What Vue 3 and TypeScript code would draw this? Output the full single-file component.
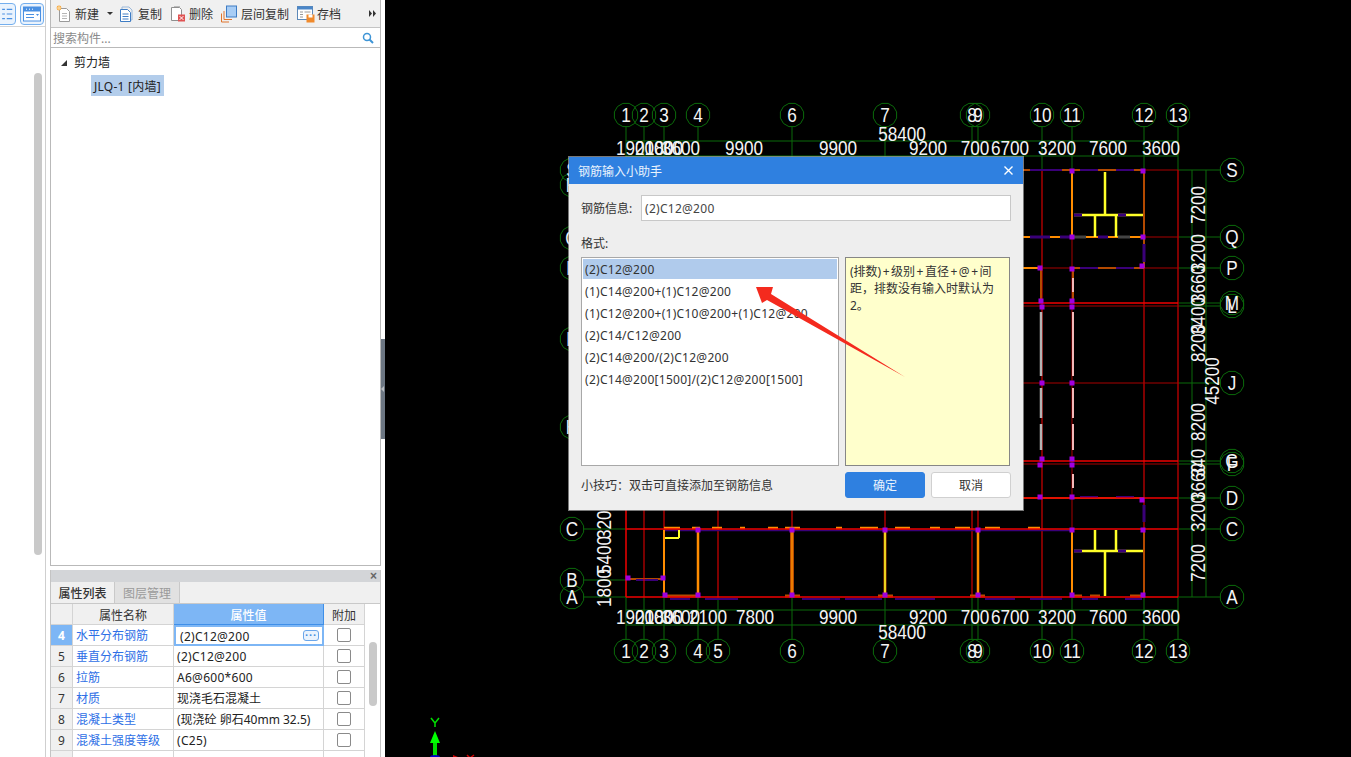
<script setup lang="ts">
type Seg = { x1: number; y1: number; x2: number; y2: number; c: string; w: number }
type Lbl = { x: number; y: number; t: string; rot?: boolean }

const GREEN = '#0b6b0b'
const DARK = '#a80000'
const RED = '#f00000'
const ORANGE = '#ff8c00'
const BROWN = '#b44a00'
const YELLOW = '#ffff28'
const NAVY = '#3a0078'
const GREY = '#b4b4b4'

const hs = (c: string, w: number, y: number, ...xs: number[]): Seg[] => {
  const out: Seg[] = []
  for (let i = 0; i < xs.length; i += 2) out.push({ x1: xs[i], y1: y, x2: xs[i + 1], y2: y, c, w })
  return out
}
const vs = (c: string, w: number, x: number, ...ys: number[]): Seg[] => {
  const out: Seg[] = []
  for (let i = 0; i < ys.length; i += 2) out.push({ x1: x, y1: ys[i], x2: x, y2: ys[i + 1], c, w })
  return out
}

const topX: [string, number][] = [['1', 626], ['2', 644], ['3', 664], ['4', 698], ['6', 792], ['7', 885], ['8', 972], ['9', 978], ['10', 1042], ['11', 1072], ['12', 1144], ['13', 1178]]
const botX: [string, number][] = [['1', 626], ['2', 644], ['3', 664], ['4', 698], ['5', 718], ['6', 792], ['7', 885], ['8', 972], ['9', 978], ['10', 1042], ['11', 1072], ['12', 1144], ['13', 1178]]
const rightY: [string, number][] = [['S', 170], ['Q', 237], ['P', 268], ['M', 303], ['L', 306], ['J', 383], ['G', 461], ['F', 464], ['D', 498], ['C', 529], ['A', 597]]
const leftY: [string, number][] = [['S', 170], ['R', 185], ['Q', 238], ['P', 268], ['K', 339], ['H', 427], ['C', 529], ['B', 580], ['A', 597]]

const ring = (cx: number, cy: number, r = 12): string => {
  const pts: string[] = []
  for (let i = 0; i < 12; i++) {
    const a = (Math.PI / 6) * i + Math.PI / 12
    pts.push(`${(cx + r * Math.cos(a)).toFixed(1)},${(cy + r * Math.sin(a)).toFixed(1)}`)
  }
  return pts.join(' ')
}

const bubbles = [
  ...topX.map(([t, x]) => ({ t, x, y: 115 })),
  ...botX.map(([t, x]) => ({ t, x, y: 651 })),
  ...rightY.map(([t, y]) => ({ t, x: 1232, y })),
  ...leftY.map(([t, y]) => ({ t, x: 572, y })),
]

const segs: Seg[] = [
  ...topX.flatMap(([, x]) => vs(GREEN, 1, x, 127, 170)),
  ...botX.flatMap(([, x]) => vs(GREEN, 1, x, 597, 639)),
  ...rightY.flatMap(([, y]) => hs(GREEN, 1, y, 1178, 1220)),
  ...leftY.flatMap(([, y]) => hs(GREEN, 1, y, 584, 626)),
  ...hs(GREEN, 1, 141, 626, 1178),
  ...hs(GREEN, 1, 156, 626, 1178),
  ...hs(GREEN, 1, 610, 626, 1178),
  ...hs(GREEN, 1, 625, 626, 1178),
  ...vs(GREEN, 1, 1192, 170, 597),
  ...vs(GREEN, 1, 1206, 170, 597),
  ...[664, 718, 792, 885, 972, 978, 1042, 1144, 1178].flatMap((x) => vs(DARK, 1.5, x, 170, 597)),
  ...vs(DARK, 1, 1072, 170, 597),
  ...[170, 237, 268, 306, 383, 464].flatMap((y) => hs(DARK, 1, y, 626, 1178)),
  ...hs(ORANGE, 2.5, 528, 664, 680, 692, 700, 712, 722, 740, 745, 768, 778, 785, 800, 836, 842, 860, 878, 895, 910, 930, 940, 955, 970),
  ...hs(ORANGE, 2.5, 528, 985, 1000, 1028, 1040),
  ...hs(NAVY, 1.5, 530.5, 664, 1072),
  ...hs(BROWN, 3, 596, 664, 700, 785, 800, 878, 893, 970, 985, 1072, 1082, 1090, 1100, 1130, 1144),
  ...hs(NAVY, 2, 599, 670, 690, 705, 738, 802, 840, 845, 882, 895, 935, 985, 1015, 1030, 1062, 1082, 1098, 1125, 1142),
  ...vs(ORANGE, 2, 664, 530, 597),
  ...vs(ORANGE, 2.5, 698, 530, 597),
  ...vs(BROWN, 4, 792, 530, 597),
  ...vs(ORANGE, 1.5, 792, 530, 597),
  ...vs(BROWN, 3, 885, 530, 597),
  ...vs(YELLOW, 1.5, 885, 530, 597),
  ...vs(ORANGE, 2.5, 978, 530, 597),
  ...vs(ORANGE, 2, 1072, 530, 597),
  ...vs(BROWN, 2, 1144, 529, 597),
  ...hs(BROWN, 2, 579, 626, 664),
  ...hs(NAVY, 2, 580, 636, 658),
  ...hs(BROWN, 2, 170, 1023, 1144),
  ...hs(NAVY, 2, 170, 1030, 1062, 1080, 1098, 1116, 1134),
  ...vs(ORANGE, 2, 1072, 170, 237),
  ...vs(BROWN, 2, 1144, 170, 268),
  ...hs(ORANGE, 2, 237, 1023, 1144),
  ...hs(NAVY, 3, 237, 1030, 1050, 1060, 1070, 1098, 1108),
  ...hs('#444444', 3, 237, 1074, 1086, 1118, 1130),
  ...hs(BROWN, 2, 268, 1072, 1144),
  ...hs(ORANGE, 2, 268, 1023, 1040),
  ...hs(NAVY, 2, 268, 1080, 1098, 1116, 1134),
  ...vs(NAVY, 3, 1144, 244, 262),
  ...hs(BROWN, 2, 498, 1023, 1144),
  ...hs(NAVY, 2, 497, 1080, 1098, 1116, 1134),
  ...vs(NAVY, 3, 1144, 505, 522),
  ...vs(BROWN, 2, 1041, 268, 303),
  ...vs(GREY, 2.5, 1041, 312, 376, 388, 418, 424, 450),
  ...vs(BROWN, 2, 1073, 268, 303),
  ...vs('#f4b8b8', 2, 1073, 278, 292, 312, 376, 388, 418, 424, 450, 474, 488),
  ...hs(RED, 1.5, 303, 626, 1178),
  ...hs(RED, 1.5, 461, 626, 1178),
  ...hs(RED, 1.5, 498, 626, 1178),
  ...hs(RED, 1.5, 529, 626, 1178),
  ...hs(RED, 1.5, 597, 626, 1178),
  ...vs(RED, 1.5, 626, 498, 597),
  ...vs(RED, 1, 644, 498, 597),
  ...vs(YELLOW, 2.5, 1105, 172, 215),
  ...hs(YELLOW, 2.5, 215, 1074, 1143),
  ...vs(YELLOW, 2.5, 1095, 215, 237),
  ...vs(YELLOW, 2.5, 1116, 215, 237),
  ...vs(YELLOW, 2.5, 1105, 551, 596),
  ...hs(YELLOW, 2.5, 551, 1074, 1143),
  ...vs(YELLOW, 2.5, 1095, 530, 551),
  ...vs(YELLOW, 2.5, 1116, 530, 551),
  ...hs(NAVY, 3, 215, 1074, 1082, 1118, 1126),
  ...hs(NAVY, 3, 551, 1074, 1082, 1118, 1126),
  ...hs(YELLOW, 2, 538, 665, 679),
  ...vs(YELLOW, 2, 679, 530, 538),
]

const nodes: [number, number][] = [
  [1072, 171], [1143, 171], [1072, 237], [1143, 237], [1040, 268], [1072, 269], [1142, 266],
  [1041, 301], [1072, 301], [1042, 307], [1072, 307], [1042, 383], [1072, 383],
  [1042, 459], [1072, 459], [1040, 465], [1072, 465], [1040, 497], [1072, 497], [1142, 500],
  [1143, 530], [1072, 530], [1072, 595], [1143, 595],
  [628, 578], [663, 578], [665, 595], [698, 595], [792, 595], [885, 595], [978, 595],
  [698, 530], [792, 530], [885, 530], [978, 530],
]

const labels: Lbl[] = [
  { x: 902, y: 141, t: '58400' },
  ...[[635, '1900'], [654, '2100'], [664, '1800'], [681, '3600'], [744, '9900'], [838, '9900'], [928, '9200'], [975, '700'], [1010, '6700'], [1057, '3200'], [1108, '7600'], [1161, '3600']].map(([x, t]) => ({ x: x as number, y: 155, t: t as string })),
  ...[[635, '1900'], [654, '2100'], [664, '1800'], [681, '3600'], [708, '2100'], [755, '7800'], [838, '9900'], [928, '9200'], [975, '700'], [1010, '6700'], [1057, '3200'], [1108, '7600'], [1161, '3600']].map(([x, t]) => ({ x: x as number, y: 624, t: t as string })),
  { x: 902, y: 639, t: '58400' },
  ...[[205, '7200'], [253, '3200'], [284, '3660'], [316, '3400'], [343, '8200'], [422, '8200'], [463, '340'], [482, '3660'], [513, '3200'], [563, '7200']].map(([y, t]) => ({ x: 1205, y: y as number, t: t as string, rot: true })),
  { x: 1219, y: 381, t: '45200', rot: true },
  ...[[520, '3200'], [555, '5400'], [588, '1800']].map(([y, t]) => ({ x: 611, y: y as number, t: t as string, rot: true })),
]

const place = (x: number, y: number, rot = false): string =>
  `translate(${x} ${y})${rot ? ' rotate(-90)' : ''} scale(0.88 1)`

const noteLine2 = '距\uFF0C排数没有输入时默认为'
const tipText = '小技巧\uFF1A双击可直接添加至钢筋信息'
const formats = ['(2)C12@200', '(1)C14@200+(1)C12@200', '(1)C12@200+(1)C10@200+(1)C12@200', '(2)C14/C12@200', '(2)C14@200/(2)C12@200', '(2)C14@200[1500]/(2)C12@200[1500]']
const rows = [
  { n: 4, name: '水平分布钢筋', val: '(2)C12@200', on: true, lat: true },
  { n: 5, name: '垂直分布钢筋', val: '(2)C12@200', on: false, lat: true },
  { n: 6, name: '拉筋', val: 'A6@600*600', on: false, lat: true },
  { n: 7, name: '材质', val: '现浇毛石混凝土', on: false, lat: false },
  { n: 8, name: '混凝土类型', val: '(现浇砼 卵石40mm 32.5)', on: false, lat: false },
  { n: 9, name: '混凝土强度等级', val: '(C25)', on: false, lat: true },
]
</script>

<template>
  <div class="page">
    <aside class="strip">
      <div class="strip-icons">
        <span class="mode-btn partial">
          <svg width="24" height="20" viewBox="0 0 24 20"><path d="M10 5h3M10 10h3M10 15h3M15 5h6M15 10h6M15 15h6" stroke="#4a90e2" stroke-width="1.3" fill="none" /></svg>
        </span>
        <span class="mode-btn">
          <svg width="20" height="18" viewBox="0 0 20 18"><rect x="1.5" y="2" width="17" height="14" fill="#fff" stroke="#4a90e2" /><rect x="1.5" y="2" width="17" height="4.5" fill="#4a90e2" /><path d="M4 4.2h1M7 4.2h1M10 4.2h1" stroke="#fff" /><path d="M4 9.5h8M4 12.5h8" stroke="#4a90e2" /><path d="M14 9l1.5 2 1.5-2" fill="#4a90e2" /></svg>
        </span>
      </div>
      <div class="strip-track"><div class="strip-thumb"></div></div>
    </aside>

    <section class="center">
      <div class="tree-panel">
        <div class="tools">
          <span class="tool t-new">
            <svg width="16" height="18" viewBox="0 0 16 18"><path d="M3.5 3.5h7l3 3v10h-10z" fill="#fff" stroke="#9a9a9a" /><path d="M6 8.500h5M6 11h5M6 13.500h5" stroke="#b5b5b5" /><circle cx="3" cy="3" r="2.400" fill="#f5a63c" /><path d="M1 3h4M3 1v4" stroke="#fde1b0" /></svg>
            <span>新建</span><i class="caret"></i>
          </span>
          <span class="tool t-copy">
            <svg width="15" height="18" viewBox="0 0 15 18"><path d="M3 4.500V2h7l3 3v10h-2" fill="none" stroke="#9cb9da" /><path d="M1.500 4.500h7l3 3v9h-10z" fill="#fff" stroke="#3e7cc4" /><path d="M3.500 9h6M3.500 11.500h6M3.500 14h6" stroke="#3e7cc4" /></svg>
            <span>复制</span>
          </span>
          <span class="tool t-del">
            <svg width="16" height="18" viewBox="0 0 16 18"><path d="M1.500 2.500h8l2 2v11h-10z" fill="#fff" stroke="#8f8f8f" /><path d="M4 1.500h6" stroke="#bbb" /><rect x="8" y="9.500" width="7" height="7" fill="#e05252" /><path d="M9.600 11.100l3.800 3.800M13.400 11.100l-3.800 3.800" stroke="#fff" /></svg>
            <span>删除</span>
          </span>
          <span class="tool t-floor">
            <svg width="16" height="18" viewBox="0 0 16 18"><path d="M.5 17V8.500M.5 17H8M3 14.500V6M3 14.500h8" stroke="#e0752e" fill="none" /><rect x="5.500" y="1" width="10" height="11" fill="#a8cdf5" stroke="#3e7cc4" /></svg>
            <span>层间复制</span>
          </span>
          <span class="tool t-save">
            <svg width="18" height="18" viewBox="0 0 18 18"><rect x=".5" y="1.500" width="15" height="13" fill="#fff" stroke="#5c88b8" /><rect x=".5" y="1.500" width="15" height="3" fill="#4a86c8" /><path d="M3 7h3M3 9.500h3M3 12h3M7.500 7h6" stroke="#9a9a9a" /><rect x="9.500" y="9.500" width="8" height="8" fill="#f08a2c" /><rect x="11.500" y="9.500" width="4" height="3" fill="#fff" /></svg>
            <span>存档</span>
          </span>
          <span class="more">
            <svg width="7" height="7" viewBox="0 0 7 7"><path d="M0 0l3 3.500L0 7zM4 0l3 3.500L4 7z" fill="#333" /></svg>
          </span>
        </div>
        <div class="search">
          <span class="ph">搜索构件...</span>
          <svg width="12" height="12" viewBox="0 0 12 12"><circle cx="5" cy="5" r="3.500" fill="none" stroke="#3d94d6" stroke-width="1.500" /><path d="M7.500 7.500L11 11" stroke="#3d94d6" stroke-width="2" /></svg>
        </div>
        <div class="tree">
          <div class="tree-root"><i class="tri"></i><span>剪力墙</span></div>
          <div class="tree-leaf"><span>JLQ-1 [内墙]</span></div>
        </div>
      </div>

      <div class="prop-panel">
        <div class="prop-head"><span class="close-x">×</span></div>
        <div class="tabs">
          <span class="tab on">属性列表</span>
          <span class="tab">图层管理</span>
        </div>
        <div class="prop-body">
          <div class="grid">
            <div class="row head">
              <span class="c num"></span>
              <span class="c name">属性名称</span>
              <span class="c val act">属性值</span>
              <span class="c add">附加</span>
            </div>
            <div v-for="r in rows" :key="r.n" class="row">
              <span class="c num" :class="{ act: r.on }">{{ r.n }}</span>
              <span class="c name link">{{ r.name }}</span>
              <span class="c val" :class="{ edit: r.on, lat: r.lat }">
                {{ r.val }}
                <span v-if="r.on" class="dots">···</span>
              </span>
              <span class="c add"><i class="check"></i></span>
            </div>
            <div class="row"><span class="c num"></span><span class="c name"></span><span class="c val"></span><span class="c add"></span></div>
          </div>
          <div class="prop-track"><div class="prop-thumb"></div></div>
        </div>
      </div>
    </section>

    <div class="rail"><div class="splitter"><i></i></div></div>

    <main class="canvas">
      <svg class="cad" width="966" height="757" viewBox="385 0 966 757">
        <line v-for="(s, i) in segs" :key="i" :x1="s.x1" :y1="s.y1" :x2="s.x2" :y2="s.y2" :stroke="s.c" :stroke-width="s.w" />
        <rect v-for="(n, i) in nodes" :key="'n' + i" :x="n[0] - 2.5" :y="n[1] - 2.5" width="5" height="5" fill="#a000e0" />
        <polygon v-for="(b, i) in bubbles" :key="'b' + i" :points="ring(b.x, b.y)" fill="none" :stroke="GREEN" stroke-width="1" />
        <text v-for="(b, i) in bubbles" :key="'t' + i" :transform="place(b.x, b.y + 7)" class="cad-t" text-anchor="middle">{{ b.t }}</text>
        <text
          v-for="(l, i) in labels"
          :key="'l' + i"
          class="cad-t"
          text-anchor="middle"
          :transform="place(l.x, l.y, l.rot)"
        >{{ l.t }}</text>
        <path d="M435 742v14" stroke="#00e000" stroke-width="4" />
        <path d="M435 731l5 12h-10z" fill="#00ff00" />
        <path d="M431 718l4 5 4-5M435 723v4" stroke="#00e000" fill="none" stroke-width="1.500" />
        <ellipse cx="435" cy="757" rx="5" ry="2" fill="#0000c0" />
        <path d="M453 755l5 2h-5z" fill="#d00000" />
        <path d="M467 755l3 3 4-3" stroke="#d00000" fill="none" stroke-width="1.500" />
      </svg>

      <div class="dialog">
        <header class="dlg-title">
          <span>钢筋输入小助手</span>
          <svg width="9" height="9" viewBox="0 0 9 9"><path d="M.5.500l8 8M8.500.500l-8 8" stroke="#fff" stroke-width="1.400" /></svg>
        </header>
        <div class="dlg-body">
          <div class="info">
            <label>钢筋信息:</label>
            <div class="input">(2)C12@200</div>
          </div>
          <div class="fmt-label">格式:</div>
          <div class="fmt-row">
            <ul class="list">
              <li v-for="(f, i) in formats" :key="f" :class="{ sel: i === 0 }">{{ f }}</li>
            </ul>
            <div class="note">(排数)<span class="p">+</span>级别<span class="p">+</span>直径<span class="p">+</span>@<span class="p">+</span>间<br />{{ noteLine2 }}<br />2。</div>
          </div>
          <div class="dlg-foot">
            <span class="tip">{{ tipText }}</span>
            <button class="btn primary">确定</button>
            <button class="btn">取消</button>
          </div>
        </div>
      </div>

      <svg class="arrow" width="160" height="100" viewBox="750 282 160 100">
        <polygon points="756,287 773,287 771,294 905,377 767,300 762,303" fill="#f42a1e" />
      </svg>
    </main>
  </div>
</template>

<style>
html, body { margin: 0; background: #fff; overflow: hidden; }
</style>

<style scoped>
.page {
  width: 1351px;
  height: 757px;
  display: flex;
  overflow: hidden;
  background: #fff;
  font-family: "Noto Sans", "Noto Sans CJK SC", sans-serif;
  font-size: 12px;
  color: #333;
}
.strip {
  width: 46px;
  flex: none;
  box-sizing: border-box;
  border-right: 1px solid #cfcfcf;
  margin-right: 4px;
}
.strip-icons {
  height: 27px;
  box-sizing: border-box;
  border-bottom: 1px solid #d4d4d4;
  padding-top: 3px;
  display: flex;
  gap: 4px;
  margin-left: -8px;
  overflow: hidden;
}
.mode-btn {
  width: 24px;
  height: 22px;
  flex: none;
  box-sizing: border-box;
  border: 1px solid #74afee;
  border-radius: 4px;
  background: #eaf3fd;
  display: flex;
  align-items: center;
  justify-content: center;
}
.strip-track { padding: 46px 0 0 34px; }
.strip-thumb { width: 8px; height: 482px; border-radius: 4px; background: #c9c9c9; }

.center { width: 331px; flex: none; display: flex; flex-direction: column; gap: 4px; }
.tree-panel {
  height: 566px;
  flex: none;
  box-sizing: border-box;
  border-left: 1px solid #b9b9b9;
  border-right: 1px solid #b9b9b9;
  border-bottom: 1px solid #b9b9b9;
  display: flex;
  flex-direction: column;
}
.tools {
  height: 28px;
  flex: none;
  box-sizing: border-box;
  background: #f0f0f0;
  border-bottom: 1px solid #c4c4c4;
  display: flex;
  align-items: center;
  padding-left: 5px;
}
.tool { display: flex; align-items: center; gap: 3px; line-height: 18px; white-space: nowrap; }
.tool > span { padding-top: 2px; }
.t-new { width: 63px; }
.t-copy { width: 51px; gap: 4px; }
.t-del { width: 51px; gap: 3px; }
.t-floor { width: 76px; gap: 4px; }
.t-save { gap: 2px; }
.caret { width: 0; height: 0; margin-left: 5px; border: 3px solid transparent; border-top: 3px solid #333; border-bottom: 0; }
.more { margin-left: auto; margin-right: 4px; display: flex; }
.search {
  height: 20px;
  flex: none;
  box-sizing: border-box;
  background: #fff;
  border-bottom: 1px solid #b9b9b9;
  padding: 0 6px 0 2px;
  display: flex;
  align-items: center;
  justify-content: space-between;
  color: #8a8a8a;
}
.tree { flex: 1; padding-top: 5px; color: #222; }
.tree-root { height: 20px; line-height: 18px; padding-left: 10px; display: flex; align-items: center; gap: 7px; }
.tri { width: 0; height: 0; border-style: solid; border-width: 0 0 6px 6px; border-color: transparent transparent #333 transparent; }
.tree-leaf { margin: 2px 0 0 40px; }
.tree-leaf span { display: inline-block; height: 21px; line-height: 23px; padding: 0 3px 0 3px; background: #b3cdeb; color: #222; letter-spacing: 0.25px; }

.prop-panel { flex: 1; min-height: 0; box-sizing: border-box; border-left: 1px solid #c4c4c4; border-right: 1px solid #c4c4c4; display: flex; flex-direction: column; background: #fff; }
.prop-head { height: 12px; flex: none; background: #d3d5d8; display: flex; justify-content: flex-end; align-items: center; padding-right: 3px; }
.close-x { font-size: 12px; line-height: 12px; color: #666; font-family: "Liberation Sans", sans-serif; font-weight: 700; }
.tabs { height: 22px; flex: none; display: flex; box-sizing: border-box; border-bottom: 1px solid #c9c9c9; background: #f0f0f0; }
.tab { width: 65px; display: flex; align-items: center; justify-content: center; background: #e1e1e1; color: #9a9a9a; border-right: 1px solid #c9c9c9; box-sizing: border-box; font-size: 12px; }
.tab.on { background: #f0f0f0; color: #333; width: 64px; font-weight: 500; }
.prop-body { display: flex; flex: 1; min-height: 0; background: #fff; }
.grid { width: 314px; flex: none; }
.row { height: 21px; display: flex; box-sizing: border-box; }
.c {
  box-sizing: border-box;
  height: 21px;
  padding-top: 2px;
  border-right: 1px solid #d4d4d4;
  border-bottom: 1px solid #d4d4d4;
  display: flex;
  align-items: center;
  line-height: 16px;
  white-space: pre;
  color: #222;
}
.num { width: 22px; justify-content: center; background: #f0f0f0; color: #333; }
.name { width: 101px; padding-left: 3px; }
.link { color: #2e6fe6; }
.val { width: 150px; padding-left: 3px; position: relative; }
.val.lat { letter-spacing: 0.28px; }
.add { width: 41px; justify-content: center; padding-top: 0; }
.head .c { background: #f0f0f0; justify-content: center; padding: 3px 0 0; color: #333; height: 21px; }
.head .val.act, .num.act { background: #7db6f5; color: #fff; font-weight: 700; }
.head .val.act { font-weight: 500; border-color: #3f8fe8; }
.edit { border: 2px solid #7db6f5; padding-left: 4px; }
.dots {
  position: absolute;
  right: 3px;
  top: 3px;
  width: 16px;
  height: 11px;
  box-sizing: border-box;
  border: 1px solid #6aa6ea;
  border-radius: 3px;
  background: #eaf3fd;
  color: #4a8fe0;
  font-size: 11px;
  line-height: 8px;
  text-align: center;
  font-weight: 700;
  font-family: "Liberation Sans", sans-serif;
}
.check { width: 14px; height: 14px; box-sizing: border-box; border: 1px solid #8a8a8a; border-radius: 2px; background: #fff; }
.prop-track { flex: 1; padding: 38px 0 0 4px; }
.prop-thumb { width: 8px; height: 64px; border-radius: 4px; background: #c9c9c9; }

.rail { width: 4px; flex: none; padding-top: 339px; box-sizing: border-box; }
.splitter { width: 4px; height: 100px; background: #6c7682; display: flex; align-items: center; }
.splitter i { width: 0; height: 0; border: 3px solid transparent; border-right: 3px solid #b8bcc0; border-left: 0; }

.canvas { flex: 1; position: relative; background: #000; overflow: hidden; min-width: 0; }
.cad { display: block; }
.cad-t { fill: #f4f4f4; font-family: "Liberation Sans", sans-serif; font-size: 19.5px; }

.dialog {
  position: absolute;
  left: 184px;
  top: 157px;
  width: 454px;
  height: 353px;
  background: #eeeeee;
  box-shadow: 0 0 0 1px rgba(200, 200, 200, 0.6);
  display: flex;
  flex-direction: column;
  color: #333;
}
.dlg-title {
  height: 27px;
  flex: none;
  background: #2f80e0;
  color: #eaf3fd;
  display: flex;
  align-items: center;
  justify-content: space-between;
  padding: 0 10px 0 9px;
}
.dlg-body { flex: 1; padding: 11px 12px 12px; display: flex; flex-direction: column; }
.info { display: flex; align-items: center; height: 26px; }
.info label { width: 60px; flex: none; }
.input {
  flex: 1;
  height: 26px;
  box-sizing: border-box;
  border: 1px solid #c8c8c8;
  background: #fff;
  padding-left: 3px;
  line-height: 26px;
  color: #444;
  letter-spacing: 0.28px;
}
.fmt-label { margin-top: 13px; height: 17px; line-height: 19px; }
.fmt-row { display: flex; gap: 6px; margin-top: 6px; height: 209px; }
.list {
  width: 258px;
  flex: none;
  margin: 0;
  padding: 1px;
  box-sizing: border-box;
  border: 1px solid #a8a8a8;
  background: #fff;
  list-style: none;
}
.list li { height: 22px; line-height: 22px; padding-left: 2px; color: #333; white-space: nowrap; letter-spacing: 0.28px; }
.list li.sel { height: 20px; margin-bottom: 2px; background: #b0cbec; }
.note {
  width: 165px;
  flex: none;
  box-sizing: border-box;
  border: 1px solid #868686;
  background: #ffffcc;
  padding: 5px 4px;
  line-height: 17px;
  color: #333;
}
.p { margin: 0 1.5px; }
.dlg-foot { display: flex; align-items: center; margin-top: 6px; height: 26px; gap: 6px; }
.tip { flex: 1; }
.btn {
  width: 80px;
  height: 26px;
  box-sizing: border-box;
  border: 1px solid #d0d0d0;
  border-radius: 3px;
  background: #fff;
  color: #333;
  padding: 0;
  font: inherit;
}
.btn.primary { background: #2f80e0; border-color: #2f80e0; color: #eaf3fd; }
.arrow { position: absolute; left: 365px; top: 282px; pointer-events: none; }
</style>
